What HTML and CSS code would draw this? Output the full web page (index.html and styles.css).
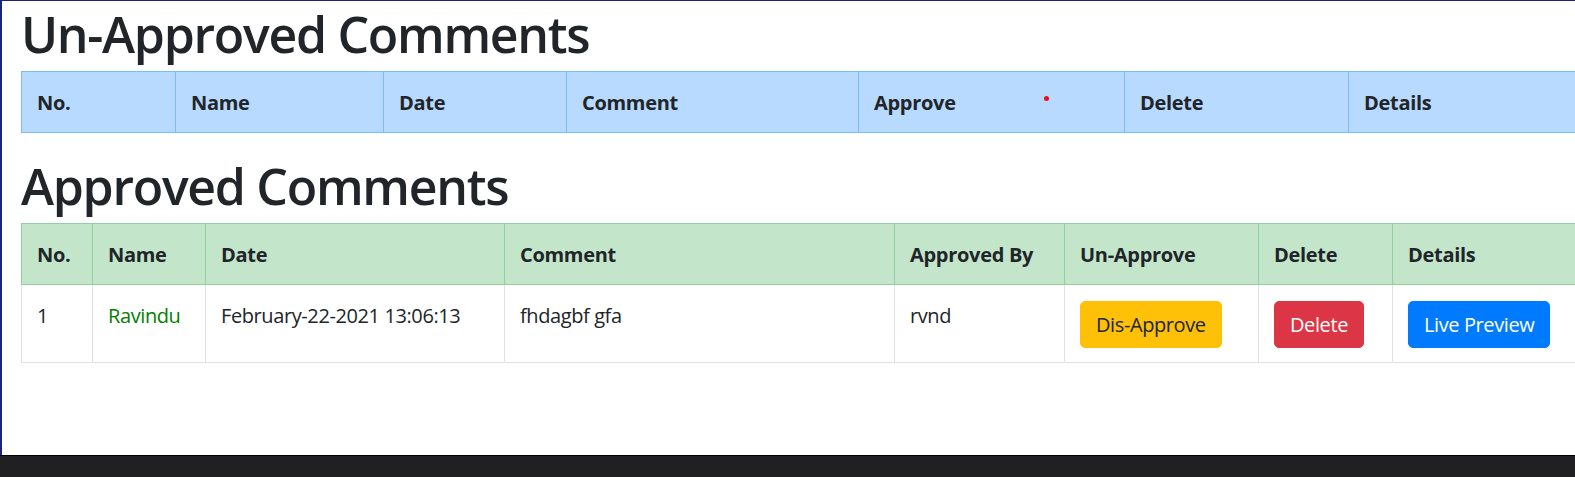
FILE: index.html
```html
<!DOCTYPE html>
<html lang="en">
<head>
<meta charset="utf-8">
<title>Comments</title>
<link rel="stylesheet" href="styles.css">
</head>
<body>
<div class="frame">
  <main class="page">
    <h1 class="title">Un-Approved Comments</h1>
    <table class="grid grid-primary t1">
      <colgroup>
        <col class="c1-1"><col class="c1-2"><col class="c1-3"><col class="c1-4"><col class="c1-5"><col class="c1-6"><col>
      </colgroup>
      <thead>
        <tr>
          <th>No.</th>
          <th>Name</th>
          <th>Date</th>
          <th>Comment</th>
          <th class="has-dot">Approve<span class="dot"></span></th>
          <th>Delete</th>
          <th>Details</th>
        </tr>
      </thead>
      <tbody></tbody>
    </table>

    <h1 class="title">Approved Comments</h1>
    <table class="grid grid-success t2">
      <colgroup>
        <col class="c2-1"><col class="c2-2"><col class="c2-3"><col class="c2-4"><col class="c2-5"><col class="c2-6"><col class="c2-7"><col>
      </colgroup>
      <thead>
        <tr>
          <th>No.</th>
          <th>Name</th>
          <th>Date</th>
          <th>Comment</th>
          <th>Approved By</th>
          <th>Un-Approve</th>
          <th>Delete</th>
          <th>Details</th>
        </tr>
      </thead>
      <tbody>
        <tr>
          <td>1</td>
          <td><a class="name" href="#">Ravindu</a></td>
          <td>February-22-2021 13:06:13</td>
          <td>fhdagbf gfa</td>
          <td>rvnd</td>
          <td><button class="btn btn-warning">Dis-Approve</button></td>
          <td><button class="btn btn-danger">Delete</button></td>
          <td><button class="btn btn-primary">Live Preview</button></td>
        </tr>
      </tbody>
    </table>
  </main>
  <footer class="taskbar"></footer>
</div>
</body>
</html>
```

FILE: styles.css
```css
* { box-sizing: border-box; }

html, body {
  margin: 0;
  padding: 0;
  height: 100%;
  overflow: hidden;
  background: #ffffff;
}

body {
  font-family: "Segoe UI", "Open Sans", "Noto Sans", sans-serif;
  font-size: 20px;
  line-height: 1.5;
  color: #212529;
}

.frame {
  height: 477px;
  display: flex;
  flex-direction: column;
}

.page {
  flex: 1;
  border-top: 1px solid #1a237e;
  border-left: 2px solid #1a237e;
  padding: 0 0 0 19px;
  overflow: hidden;
}

.taskbar {
  height: 22px;
  flex: none;
  background: #201f21;
  border-top: 1px solid #000000;
}

.title {
  margin: 0 0 4px 0;
  font-size: 50px;
  font-weight: 600;
  line-height: 66px;
  letter-spacing: -1.3px;
  white-space: nowrap;
}

.grid {
  border-collapse: collapse;
  table-layout: fixed;
  width: 1640px;
  margin-bottom: 20px;
}

.grid th,
.grid td {
  padding: 16px 15px 14px 15px;
  text-align: left;
  vertical-align: top;
  white-space: nowrap;
  border: 1px solid #dee2e6;
  letter-spacing: -0.4px;
}

.grid th {
  font-weight: 700;
  letter-spacing: -0.3px;
}

.grid-primary th {
  background: #b8daff;
  border-color: #7abaff;
}

.grid-success th {
  background: #c3e6cb;
  border-color: #8fd19e;
}

.has-dot { position: relative; }

.dot {
  position: absolute;
  left: 185px;
  top: 24px;
  width: 5px;
  height: 5px;
  border-radius: 50%;
  background: #e8101a;
}

/* table 1 columns */
.c1-1 { width: 154px; }
.c1-2 { width: 208px; }
.c1-3 { width: 183px; }
.c1-4 { width: 292px; }
.c1-5 { width: 266px; }
.c1-6 { width: 224px; }

/* table 2 columns */
.c2-1 { width: 71px; }
.c2-2 { width: 113px; }
.c2-3 { width: 299px; }
.c2-4 { width: 390px; }
.c2-5 { width: 170px; }
.c2-6 { width: 194px; }
.c2-7 { width: 134px; }

.name {
  color: #008000;
  text-decoration: none;
}

.btn {
  display: inline-block;
  font-family: inherit;
  font-size: 20px;
  font-weight: 400;
  line-height: 1.5;
  letter-spacing: -0.4px;
  padding: 7.5px 15px;
  border: 1px solid transparent;
  border-radius: 5px;
  cursor: pointer;
}

.btn-warning { background: #ffc107; border-color: #ffc107; color: #212529; }
.btn-danger { background: #dc3545; border-color: #dc3545; color: #ffffff; }
.btn-primary { background: #007bff; border-color: #007bff; color: #ffffff; }
```
